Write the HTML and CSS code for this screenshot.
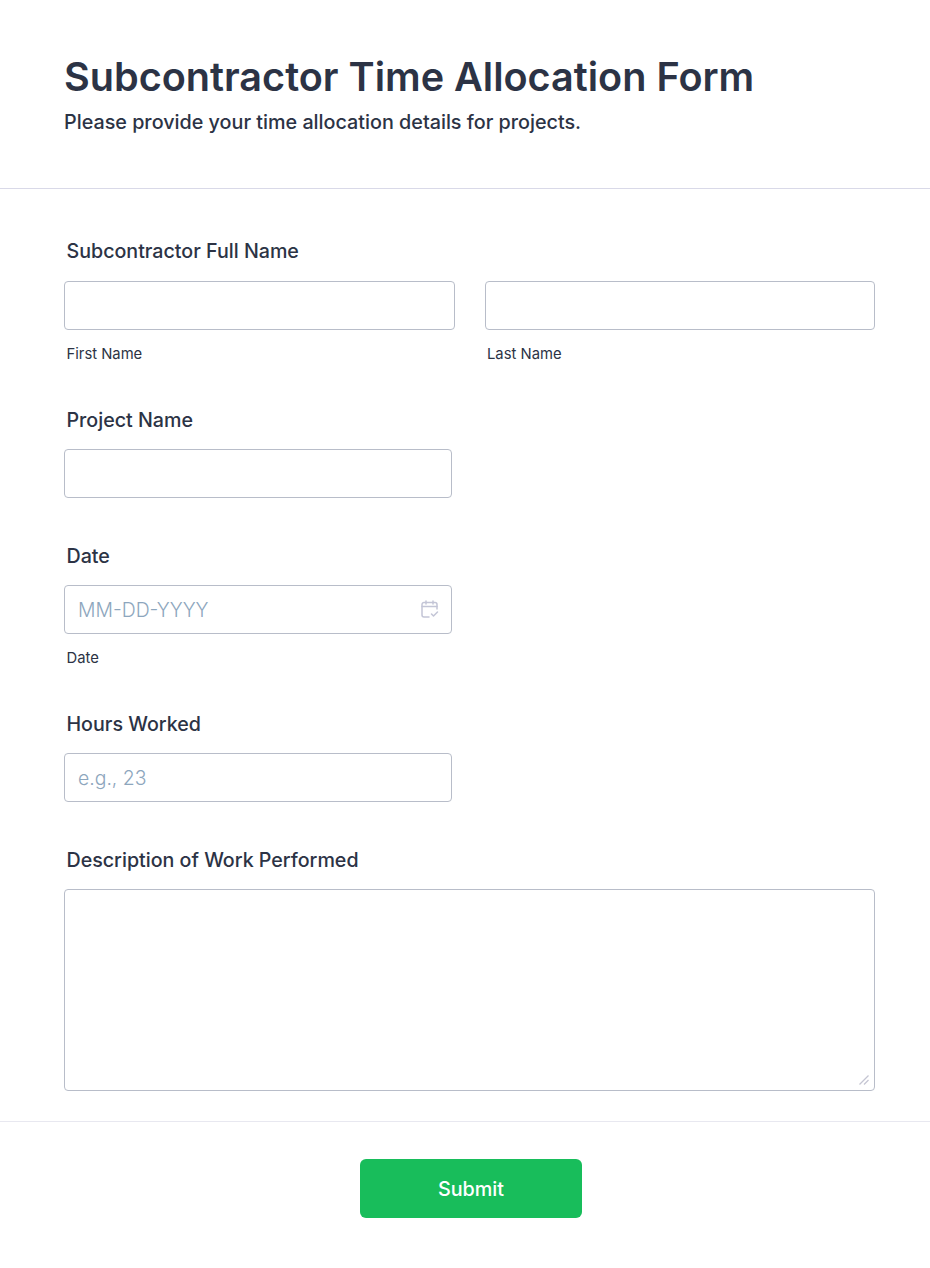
FILE: index.html
```html
<!DOCTYPE html>
<html lang="en">
<head>
<meta charset="utf-8">
<title>Subcontractor Time Allocation Form</title>
<link rel="stylesheet" href="styles.css">
</head>
<body>
<form class="form">
  <header class="header">
    <h1 class="title">Subcontractor Time Allocation Form</h1>
    <p class="subtitle">Please provide your time allocation details for projects.</p>
  </header>
  <main class="fields">
    <section class="field field-sub field-first">
      <label class="label">Subcontractor Full Name</label>
      <div class="name-row">
        <div class="name-col">
          <input class="input" type="text" aria-label="First Name">
          <span class="sublabel">First Name</span>
        </div>
        <div class="name-col">
          <input class="input" type="text" aria-label="Last Name">
          <span class="sublabel">Last Name</span>
        </div>
      </div>
    </section>
    <section class="field">
      <label class="label">Project Name</label>
      <input class="input input-half" type="text">
    </section>
    <section class="field field-sub">
      <label class="label">Date</label>
      <div class="date-wrap">
        <input class="input" type="text" placeholder="MM-DD-YYYY">
        <svg class="date-icon" viewBox="0 0 18 18" width="18" height="18" fill="none" stroke="#c3c5d6" stroke-width="1.5" stroke-linecap="round" stroke-linejoin="round" aria-hidden="true">
          <path d="M8 17H3a2 2 0 0 1-2-2V4.500a2 2 0 0 1 2-2h11a2 2 0 0 1 2 2V9"/>
          <path d="M1 6.500h15"/>
          <path d="M5 1v3M12 1v3"/>
          <path d="M10.500 14l2 2 4-4"/>
        </svg>
      </div>
      <span class="sublabel">Date</span>
    </section>
    <section class="field">
      <label class="label">Hours Worked</label>
      <input class="input input-half" type="text" placeholder="e.g., 23">
    </section>
    <section class="field field-last">
      <label class="label">Description of Work Performed</label>
      <div class="textarea-wrap">
        <textarea class="textarea"></textarea>
        <svg class="grip" viewBox="0 0 10 10" width="10" height="10" fill="none" stroke="#c4c5d2" stroke-width="1.2" aria-hidden="true">
          <path d="M0.500 9.500L9.500 0.500"/>
          <path d="M5 9.500L9.500 5"/>
        </svg>
      </div>
    </section>
  </main>
  <footer class="footer">
    <button class="submit" type="button">Submit</button>
  </footer>
</form>
</body>
</html>
```

FILE: styles.css
```css
* {
  box-sizing: border-box;
}

html,
body {
  margin: 0;
  padding: 0;
  background: #ffffff;
}

body {
  font-family: Inter, "Liberation Sans", sans-serif;
  color: #2c3345;
}

.header {
  padding: 53px 64px 54px;
  border-bottom: 1px solid #d9d9e8;
}

.title {
  margin: 0 0 9px;
  font-size: 39.6px;
  line-height: 48px;
  font-weight: 600;
}

.subtitle {
  margin: 0;
  font-size: 19.75px;
  line-height: 24px;
  font-weight: 500;
}

.fields {
  padding: 50px 55px 30px 64px;
}

.field {
  margin-bottom: 46px;
}

.field-sub {
  margin-bottom: 45px;
}

.field-last {
  margin-bottom: 0;
}

.label {
  display: block;
  margin: 0 0 17px 2.500px;
  font-size: 19.65px;
  line-height: 24px;
  font-weight: 500;
}

.field-first .label {
  margin-bottom: 18px;
}

.name-row {
  display: flex;
  gap: 30px;
}

.name-col {
  flex: 1;
}

.input {
  display: block;
  width: 100%;
  height: 49px;
  padding: 0 13px;
  border: 1px solid #b8bdc9;
  border-radius: 4px;
  background: #ffffff;
  font-family: inherit;
  font-size: 19.4px;
  font-weight: 300;
  color: #2c3345;
}

.input::placeholder {
  color: #8da6bd;
  opacity: 1;
}

.input-half,
.date-wrap {
  width: 388px;
}

.date-wrap {
  position: relative;
}

.date-icon {
  position: absolute;
  top: 15px;
  right: 13.500px;
}

.sublabel {
  display: block;
  margin: 15px 0 0 2.500px;
  font-size: 14.8px;
  line-height: 18px;
  color: #2c3345;
}

.textarea-wrap {
  position: relative;
}

.textarea {
  display: block;
  width: 100%;
  height: 202px;
  padding: 9px 13px;
  border: 1px solid #b8bdc9;
  border-radius: 4px;
  background: #ffffff;
  font-family: inherit;
  font-size: 18px;
  color: #2c3345;
  resize: none;
}

.grip {
  position: absolute;
  right: 6px;
  bottom: 6px;
}

.footer {
  display: flex;
  justify-content: center;
  padding: 37px 0 50px 12px;
  border-top: 1px solid #e8e8f0;
}

.submit {
  width: 222px;
  height: 59px;
  border: 0;
  border-radius: 6px;
  background: #18bd5b;
  color: #ffffff;
  font-family: inherit;
  font-size: 19.8px;
  font-weight: 500;
}
```
